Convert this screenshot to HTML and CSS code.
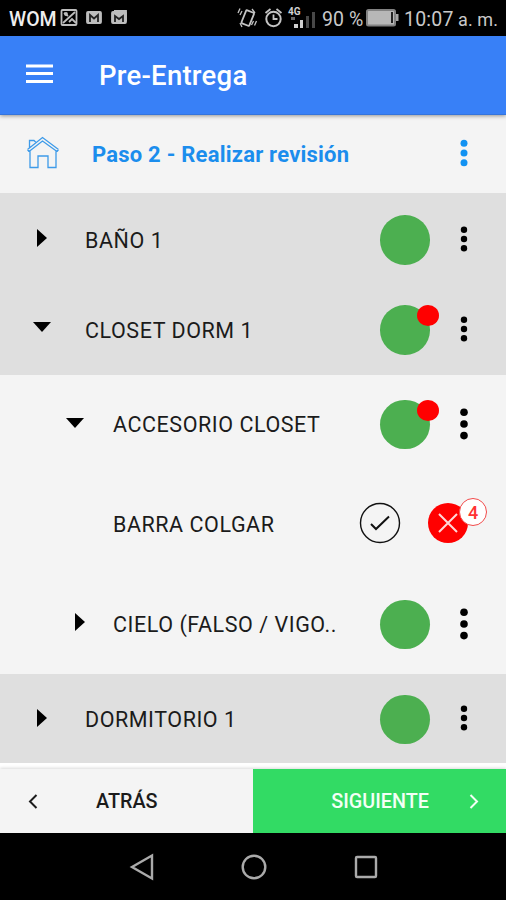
FILE: index.html
```html
<!DOCTYPE html>
<html lang="es">
<head>
<meta charset="utf-8">
<title>Pre-Entrega</title>
<link rel="stylesheet" href="styles.css">
</head>
<body>
<svg class="defs" width="0" height="0">
  <symbol id="right" viewBox="0 0 10 18"><path d="M0 0L10 9L0 18Z"/></symbol>
  <symbol id="down" viewBox="0 0 18 10"><path d="M0 0H18L9 10Z"/></symbol>
  <symbol id="dots" viewBox="0 0 8 26"><circle cx="4" cy="3.7" r="3.2"/><circle cx="4" cy="13" r="3.2"/><circle cx="4" cy="22.3" r="3.2"/></symbol>
  <symbol id="dots-tall" viewBox="0 0 8 32"><circle cx="4" cy="4.2" r="3.8"/><circle cx="4" cy="16" r="3.8"/><circle cx="4" cy="27.6" r="3.8"/></symbol>
</svg>
<div class="screen">
  <div class="status">
    <span class="carrier">WOM</span>
    <svg class="notes" width="68" height="20" viewBox="0 0 68 20" fill="none" stroke="#bdbdbd" stroke-width="1.800">
      <rect x="1.500" y="2" width="15" height="15" rx="1"/><path d="M3 15L15 4M4 5l4 3M9 14l3-3 4 4"/><circle cx="6" cy="6" r="1" fill="#bdbdbd"/>
      <rect x="27" y="4" width="14" height="11" rx="1" fill="#bdbdbd"/><path d="M30 14V7l4 3.500 4-3.500v7" stroke="#222"/>
      <rect x="52" y="4" width="14" height="11" rx="1" fill="#bdbdbd"/><path d="M55 14V8l4 3 4-3v6" stroke="#222"/><path d="M54 3h12v10"/>
    </svg>
    <svg class="signals" width="78" height="24" viewBox="0 0 78 24" fill="none" stroke="#c4c4c4" stroke-width="1.800">
      <rect x="5.500" y="5" width="8.500" height="14" rx="1" transform="rotate(22 9.700 12)"/>
      <path d="M4 5l-2 4M2 2.500L0 7M15.500 15l-2 4M18.500 15l-2 4.500M2 17l2 4M14 3l3 4" stroke-width="1.300"/>
      <circle cx="35.500" cy="13" r="7.200" stroke-width="2"/><path d="M35.500 8.500V13h4M27.500 7l5-4M43.500 7l-5-4"/>
      <g stroke="none" fill="#d0d0d0"><text x="50" y="9" class="net">4G</text><path d="M56 18h4v4h-4zM62 14h3v8h-3z"/><path d="M53 11h4v3h-4z" fill="#666"/><path d="M68 10h3v12h-3zM74 6h3v16h-3z" fill="#484848"/></g>
    </svg>
    <span class="percent">90 %</span>
    <svg class="battery" width="33" height="18" viewBox="0 0 33 18"><rect x="1" y="1" width="28" height="15.500" rx="1.500" fill="#b7b7b7" stroke="#828282" stroke-width="2"/><path d="M26 3v11" stroke="#222" stroke-width="2"/><rect x="30" y="5" width="2.500" height="7" fill="#a5a5a5"/></svg>
    <span class="clock">10:07</span><span class="ampm">a. m.</span>
  </div>
  <header class="header">
    <svg width="28" height="20" viewBox="0 0 28 20" stroke="#fff" stroke-width="3.200"><path d="M0 2H27M0 9.500H27M0 17.500H27"/></svg>
    <h1>Pre-Entrega</h1>
  </header>
  <div class="step">
    <svg class="home" width="34" height="34" viewBox="0 0 34 34" fill="none" stroke="#3e9be9" stroke-width="1.300">
      <path d="M1.500 13.500L16.500 1.500L32.500 13.500M3 15.500L16.500 5L31 15.500M1.500 13.500L3 15.500M32.500 13.500L31 15.500M3.500 11.500V4.500h4.500l2 2M4 15v16.500H12V20h10v11.500h8V15"/>
    </svg>
    <h2>Paso 2 - Realizar revisión</h2>
    <svg class="more" width="8" height="28" viewBox="0 0 8 28"><circle cx="4" cy="4.200" r="3.500"/><circle cx="4" cy="14" r="3.500"/><circle cx="4" cy="23.800" r="3.500"/></svg>
  </div>
  <main class="list">
    <div class="row room first">
      <svg class="right"><use href="#right"/></svg><span class="label">BAÑO 1</span><i class="state"></i><svg class="dots"><use href="#dots"/></svg>
    </div>
    <div class="row room">
      <svg class="down"><use href="#down"/></svg><span class="label">CLOSET DORM 1</span><i class="state alert"></i><svg class="dots"><use href="#dots"/></svg>
    </div>
    <div class="row item">
      <svg class="down"><use href="#down"/></svg><span class="label">ACCESORIO CLOSET</span><i class="state alert"></i><svg class="dots-tall"><use href="#dots-tall"/></svg>
    </div>
    <div class="row check">
      <span class="label">BARRA COLGAR</span>
      <svg class="ok" width="42" height="42" viewBox="0 0 42 42" fill="none" stroke="#111"><circle cx="21" cy="21" r="19.500" stroke-width="1.400"/><path d="M12 22l5 5L30 14.500" stroke-width="2"/></svg>
      <span class="reject"><svg width="40" height="40" viewBox="0 0 40 40"><circle cx="20" cy="20" r="20" fill="#f00"/><path d="M11 11L29 29M29 11L11 29" stroke="#ffd9d9" stroke-width="2"/></svg><b>4</b></span>
    </div>
    <div class="row item">
      <svg class="right"><use href="#right"/></svg><span class="label">CIELO (FALSO / VIGO..</span><i class="state"></i><svg class="dots-tall"><use href="#dots-tall"/></svg>
    </div>
    <div class="row room last">
      <svg class="right"><use href="#right"/></svg><span class="label">DORMITORIO 1</span><i class="state"></i><svg class="dots"><use href="#dots"/></svg>
    </div>
  </main>
  <footer class="footer">
    <div class="back"><svg width="10" height="16" viewBox="0 0 10 16"><path d="M8.500 2L2 8.500l6.500 6.500"/></svg><span>ATRÁS</span></div>
    <div class="next"><span>SIGUIENTE</span><svg width="10" height="16" viewBox="0 0 10 16"><path d="M1.500 2L8 8.500 1.500 15"/></svg></div>
  </footer>
  <nav class="nav">
    <svg width="24" height="28" viewBox="0 0 24 28"><path d="M2 14L22 2.500V25.500Z"/></svg>
    <svg width="26" height="28" viewBox="0 0 26 28"><circle cx="13" cy="14" r="11.300"/></svg>
    <svg width="24" height="28" viewBox="0 0 24 28"><rect x="2" y="4" width="20" height="20" rx="1"/></svg>
  </nav>
</div>
</body>
</html>
```
FILE: styles.css
```css
* { box-sizing: border-box; }
body { margin: 0; font-family: Roboto, sans-serif; color: #1b1b1b; background: #fff; }
svg { display: block; flex: none; overflow: visible; }
.defs { position: absolute; }
h1, h2 { margin: 0; white-space: nowrap; }
.screen { width: 506px; height: 900px; display: flex; flex-direction: column; overflow: hidden; }
.screen > * { flex: none; }

.status { height: 36px; background: #000; color: #c9c9c9; display: flex; align-items: center; font-size: 20px; white-space: nowrap; }
.status > span { flex: none; line-height: 24px; padding-top: 3px; }
.carrier { width: 51px; padding-left: 9px; color: #eee; font-size: 19.5px; font-weight: 500; }
.notes { margin-left: 9px; }
.signals { margin-left: 110px; }
.net { font-size: 10px; font-weight: 700; }
.percent { width: 45px; margin-left: 6px; font-size: 19.5px; letter-spacing: .1px; }
.battery { margin-left: -1px; }
.clock { width: 52px; margin-left: 5px; font-size: 19.5px; letter-spacing: .2px; }
.ampm { margin-left: 2px; font-size: 18px; letter-spacing: .1px; }

.header { height: 79px; background: #3880f7; color: #fff; display: flex; align-items: center; padding-left: 26px; box-shadow: 0 1px 4px rgba(0, 0, 0, .4); z-index: 1; border-bottom: 1px solid #3474dc; }
.header svg { margin-top: -3px; }
.header h1 { margin-left: 45px; font-size: 27.5px; font-weight: 500; line-height: 36px; letter-spacing: .25px; padding-top: 1px; }

.step { height: 78px; background: #f4f4f4; color: #1b8ded; display: flex; align-items: center; padding: 0 38px 0 26px; }
.home { margin-top: -2px; }
.step h2 { margin-left: 32px; font-size: 22px; font-weight: 700; flex: 1; letter-spacing: .22px; }
.more { fill: #1292f2; margin-top: -3px; }

.list { height: 576px; background: #fff; }
.row { height: 100px; display: flex; align-items: center; background: #f4f4f4; padding-right: 38px; }
.room { height: 91px; background: #dfdfdf; padding-left: 33px; }
.item { padding-left: 66px; }
.last { height: 89px; margin-top: -1px; }
.right { width: 10px; height: 18px; margin: -2px 38px 0 4px; }
.item .right { margin: -6px 28px 0 9px; }
.down { width: 18px; height: 10px; margin: -5px 34px 0 0; }
.item .down { margin: -5px 29px 0 0; }
.label { flex: 1; font-size: 21.5px; line-height: 28px; letter-spacing: .55px; white-space: nowrap; }
.room .label { padding-top: 2px; }
.first .label { padding-top: 4px; }
.state { position: relative; flex: none; width: 49.5px; height: 49.5px; border-radius: 50%; background: #4caf50; margin: 1px 30.5px 0 0; }
.first .state { margin-top: 3px; }
.item .state { margin-top: -1px; }
.last .state { margin-top: 2px; }
.alert::after { content: ""; position: absolute; left: 37px; top: 0; width: 22px; height: 21px; border-radius: 50%; background: #f00; }
.dots { width: 8px; height: 26px; margin-top: -1px; }
.first .dots { margin-top: 1px; }
.item .dots-tall { width: 8px; height: 32px; margin-top: -2px; }
.check { padding: 0 38px 0 113px; }
.ok { margin: -4px 27px 0 0; }
.reject { position: relative; width: 40px; height: 40px; margin-top: -4px; }
.reject b { position: absolute; left: 31px; top: -5px; width: 28px; height: 28px; border: 1.4px solid #f24a4a; border-radius: 50%; background: #fff; color: #f33; font-size: 18px; font-weight: 500; line-height: 27px; text-align: center; }

.footer { height: 64px; display: flex; font-size: 19.8px; font-weight: 500; box-shadow: 0 -1px 3px rgba(0, 0, 0, .15); }
.footer path { fill: none; stroke: currentColor; stroke-width: 2; }
.back { width: 253px; background: #f4f4f4; display: flex; align-items: center; padding-left: 28px; }
.back span { margin-left: 58px; }
.next { flex: 1; background: #32db64; color: #f3fff5; display: flex; align-items: center; justify-content: flex-end; padding-right: 27px; }
.next span { margin-right: 40px; }
.nav { height: 67px; background: #000; display: flex; align-items: center; padding: 0 0 0 130px; gap: 87px; }
.nav svg { fill: none; stroke: #aaa; stroke-width: 2.4; }
```
